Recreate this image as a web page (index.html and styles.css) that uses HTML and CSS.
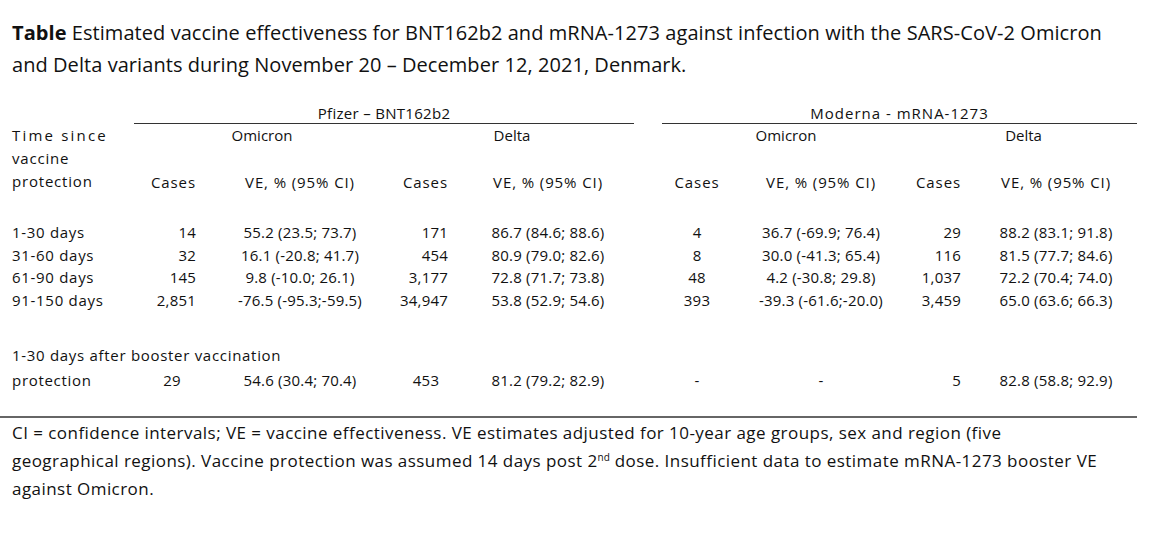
FILE: index.html
```html
<!DOCTYPE html>
<html>
<head>
<meta charset="utf-8">
<link rel="stylesheet" href="styles.css">
</head>
<body>
<div class="page">
  <p class="caption"><b>Table</b> Estimated vaccine effectiveness for BNT162b2 and mRNA-1273 against infection with the SARS-CoV-2 Omicron<br>and Delta variants during November 20 – December 12, 2021, Denmark.</p>
  <table class="ve">
    <colgroup>
      <col class="c-label"><col class="c-cases1"><col class="c-ve1"><col class="c-cases2"><col class="c-ve2"><col class="c-gap"><col class="c-cases3"><col class="c-ve3"><col class="c-cases4"><col class="c-ve4">
    </colgroup>
    <thead>
      <tr class="r-group">
        <th></th>
        <th colspan="4" class="group">Pfizer – BNT162b2</th>
        <th></th>
        <th colspan="4" class="group wide">Moderna - mRNA-1273</th>
      </tr>
      <tr class="r-variant">
        <th rowspan="3" class="label-head"><span class="sp-wide">Time since</span><br>vaccine<br>protection</th>
        <th colspan="2" class="ctr">Omicron</th>
        <th colspan="2" class="ctr">Delta</th>
        <th></th>
        <th colspan="2" class="ctr">Omicron</th>
        <th colspan="2" class="ctr">Delta</th>
      </tr>
      <tr class="r-blank"><th colspan="9"></th></tr>
      <tr class="r-cols">
        <th class="rt">Cases</th><th class="ctr">VE, % (95% CI)</th>
        <th class="rt">Cases</th><th class="ctr">VE, % (95% CI)</th>
        <th></th>
        <th class="ctr">Cases</th><th class="ctr">VE, % (95% CI)</th>
        <th class="rt">Cases</th><th class="ctr">VE, % (95% CI)</th>
      </tr>
    </thead>
    <tbody>
      <tr class="r-first">
        <td class="lbl">1-30 days</td><td class="rt">14</td><td class="ctr">55.2 (23.5; 73.7)</td><td class="rt">171</td><td class="ctr">86.7 (84.6; 88.6)</td><td></td><td class="ctr">4</td><td class="ctr">36.7 (-69.9; 76.4)</td><td class="rt">29</td><td class="ctr">88.2 (83.1; 91.8)</td>
      </tr>
      <tr>
        <td class="lbl">31-60 days</td><td class="rt">32</td><td class="ctr">16.1 (-20.8; 41.7)</td><td class="rt">454</td><td class="ctr">80.9 (79.0; 82.6)</td><td></td><td class="ctr">8</td><td class="ctr">30.0 (-41.3; 65.4)</td><td class="rt">116</td><td class="ctr">81.5 (77.7; 84.6)</td>
      </tr>
      <tr>
        <td class="lbl">61-90 days</td><td class="rt">145</td><td class="ctr">9.8 (-10.0; 26.1)</td><td class="rt">3,177</td><td class="ctr">72.8 (71.7; 73.8)</td><td></td><td class="ctr">48</td><td class="ctr">4.2 (-30.8; 29.8)</td><td class="rt">1,037</td><td class="ctr">72.2 (70.4; 74.0)</td>
      </tr>
      <tr>
        <td class="lbl">91-150 days</td><td class="rt">2,851</td><td class="ctr">-76.5 (-95.3;-59.5)</td><td class="rt">34,947</td><td class="ctr">53.8 (52.9; 54.6)</td><td></td><td class="ctr">393</td><td class="ctr">-39.3 (-61.6;-20.0)</td><td class="rt">3,459</td><td class="ctr">65.0 (63.6; 66.3)</td>
      </tr>
      <tr class="r-booster-label">
        <td colspan="10" class="lbl">1-30 days after booster vaccination</td>
      </tr>
      <tr class="r-booster">
        <td class="lbl">protection</td><td class="ctr">29</td><td class="ctr">54.6 (30.4; 70.4)</td><td class="ctr">453</td><td class="ctr">81.2 (79.2; 82.9)</td><td></td><td class="ctr">-</td><td class="ctr">-</td><td class="rt">5</td><td class="ctr">82.8 (58.8; 92.9)</td>
      </tr>
    </tbody>
  </table>
</div>
<div class="rule"></div>
<p class="note">CI = confidence intervals; VE = vaccine effectiveness. VE estimates adjusted for 10-year age groups, sex and region (five<br>geographical regions). Vaccine protection was assumed 14 days post 2<sup>nd</sup> dose. Insufficient data to estimate mRNA-1273 booster VE<br>against Omicron.</p>
</body>
</html>
```

FILE: styles.css
```css
html, body {
  margin: 0;
  padding: 0;
  background: #fff;
}
body {
  font-family: "Open Sans", Lato, sans-serif;
  color: #111;
  width: 1152px;
  height: 535px;
  overflow: hidden;
}
.page {
  padding: 17px 0 0 12px;
}
.caption {
  margin: 0;
  font-size: 20px;
  line-height: 32px;
  letter-spacing: 0.06px;
  white-space: nowrap;
}
.caption b {
  font-weight: 700;
}
.ve {
  border-collapse: collapse;
  table-layout: fixed;
  width: 1125px;
  margin-top: 22px;
  font-size: 15px;
}
.ve th, .ve td {
  padding: 0;
  font-weight: 400;
  white-space: nowrap;
  line-height: 23px;
  height: 23px;
  vertical-align: middle;
}
.ve td {
  letter-spacing: 0.2px;
}
.c-label { width: 122px; }
.c-cases1 { width: 76px; }
.c-ve1 { width: 180px; }
.c-cases2 { width: 72px; }
.c-ve2 { width: 172px; }
.c-gap { width: 28px; }
.c-cases3 { width: 70px; }
.c-ve3 { width: 178px; }
.c-cases4 { width: 65px; }
.c-ve4 { width: 162px; }

.ve .r-group th {
  height: 20px;
  line-height: 20px;
}
.group {
  text-align: center;
  border-bottom: 1px solid #333;
  letter-spacing: 0.3px;
}
.group.wide {
  letter-spacing: 1px;
}
.ve .label-head {
  text-align: left;
  vertical-align: top;
  letter-spacing: 0.8px;
}
.sp-wide {
  letter-spacing: 2.2px;
}
.ctr { text-align: center; }
.ve td.lbl { text-align: left; letter-spacing: 0.7px; }
.ve th.rt, .ve td.rt { text-align: right; padding-right: 14px; }
.ve .r-cols th { height: 24px; line-height: 24px; letter-spacing: 0.9px; }
.ve tbody tr td { height: 22.6px; line-height: 22.6px; }
.ve .r-first td { padding-top: 27px; }
.ve .r-booster-label td { padding-top: 33px; }
.ve .r-booster td { height: 26px; line-height: 26px; }
.rule {
  margin-top: 23px;
  width: 1137px;
  height: 2px;
  background: #666;
}
.note {
  margin: 1px 0 0 12px;
  font-size: 17px;
  line-height: 28px;
  letter-spacing: 0.45px;
  color: #111;
  white-space: nowrap;
}
.note sup {
  font-size: 10px;
  line-height: 0;
  vertical-align: 6px;
  letter-spacing: 0;
}
```
